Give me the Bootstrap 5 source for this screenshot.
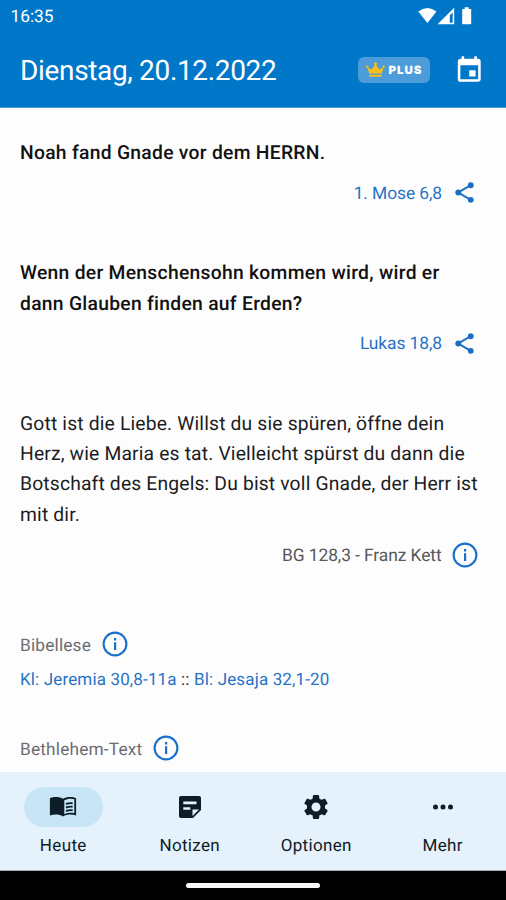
<!DOCTYPE html>
<html lang="de">
<head>
<meta charset="utf-8">
<meta name="viewport" content="width=device-width, initial-scale=1">
<title>Dienstag, 20.12.2022</title>
<link href="https://cdn.jsdelivr.net/npm/bootstrap@5.3.0/dist/css/bootstrap.min.css" rel="stylesheet">
<style>
  body { font-family: Roboto, "Liberation Sans", sans-serif; background: #fefdfe; color: #1b1c1e; width: 506px; height: 900px; text-rendering: geometricPrecision; }
  svg { display: block; flex: none; }
  .app-head { height: 108px; background: #0077c9; border-bottom: 1px solid #4b9cd8; }
  .status { height: 32px; padding: 0 32px 0 10.5px; font-size: 17.3px; line-height: 32px; }
  .status span { padding-top: 1px; }
  .title { font-size: 28px; line-height: 36px; letter-spacing: -.34px; font-weight: 400; padding-top: 2px; }
  .bar { height: 76px; padding: 0 21.5px 0 20px; }
  .plus { width: 72px; height: 26px; border-radius: 6px; background: #4b9cd8; gap: 4px; margin-right: 24px; margin-top: -1px; }
  .plus span { font: 900 11.5px/26px Inter, sans-serif; letter-spacing: .95px; }
  .content { padding: 30px 28.5px 0 20px; }
  .verse, .thought { font-size: 19.3px; line-height: 30.4px; margin: 0; white-space: nowrap; }
  .verse { font-weight: 500; letter-spacing: .28px; color: #111; }
  .thought { letter-spacing: .16px; }
  .source { height: 50px; font-size: 17.4px; letter-spacing: -.08px; }
  .source, .topic { color: #55585c; }
  .source span, .source a, .topic span { padding-top: 1px; }
  .source svg { margin: 0 0 1px 10px; }
  .source.shared svg { margin: 0 1px 1px 9.5px; }
  .section { margin-bottom: 39.7px; }
  .topic { height: 30px; font-size: 17.3px; color: #6c6e72; letter-spacing: .17px; gap: 11px; }
  .topic svg { margin-bottom: 3px; }
  .topic span { padding-top: 2px; }
  .app-link { color: #2673c5; text-decoration: none; }
  .reading { font-size: 17px; line-height: 30px; letter-spacing: .15px; margin: 4px 0 40px; }
  .lessons { padding-top: 50.5px; }
  .tabs { height: 99px; background: #e5f1fb; color: #0d1c27; padding-top: 15px; border-bottom: 1px solid #a5adb3; }
  .tab { color: inherit; text-decoration: none; font-size: 17px; line-height: 24px; letter-spacing: .35px; }
  .pill { width: 79px; height: 40px; border-radius: 20px; margin-bottom: 7px; }
  .tab.active .pill { background: #c8e5f7; }
  .gesture { height: 29px; background: #000; }
  .gesture div { width: 134px; height: 5px; border-radius: 3px; background: #f8f8f8; }
</style>
<script src="https://cdn.jsdelivr.net/npm/bootstrap@5.3.0/dist/js/bootstrap.bundle.min.js"></script>
</head>
<body class="d-flex flex-column overflow-hidden m-0">
<svg width="0" height="0" class="d-none">
  <symbol id="share" viewBox="0 0 24 24"><path fill="none" stroke="#1a6fc4" stroke-width="1.9" d="M18 5 6 12l12 7"/><g fill="#1a6fc4"><circle cx="18" cy="5" r="2.8"/><circle cx="6" cy="12" r="2.8"/><circle cx="18" cy="19" r="2.8"/></g></symbol>
  <symbol id="info" viewBox="0 0 26 26"><circle cx="13" cy="13" r="11.4" fill="none" stroke="#1a70c8" stroke-width="2.1"/><path fill="#1a70c8" d="M12 7h2.200v2.400H12zM12 11.300h2.200v7.600H12z"/></symbol>
</svg>

<header class="app-head text-white flex-shrink-0">
  <div class="status d-flex justify-content-between align-items-center">
    <span>16:35</span>
    <svg width="56" height="20" viewBox="0 0 56 20" fill="#fff">
      <path d="M.3 5.600Q9.500-1.800 18.500 5.600L9.400 17z"/>
      <path d="M36.200 1.800V18.200H19.500z"/><path fill="#0077c9" d="M34.700 6.500v10.200h-2.900V9.300z"/>
      <path d="M44.200 3h2.500V1.200h4V3h2.500v14.200q0 1-1 1h-7q-1 0-1-1z"/>
    </svg>
  </div>
  <div class="bar d-flex align-items-center">
    <h1 class="title mb-0 me-auto">Dienstag, 20.12.2022</h1>
    <div class="plus d-flex align-items-center justify-content-center">
      <svg width="19" height="16" viewBox="0 0 19 16" fill="#f9bd1c"><path d="M3.200 11.500 1.400 5.300l4.300 2.200L9.500 2l3.800 5.500 4.300-2.200-1.800 6.200zM3.300 12.700h12.400v2.100H3.300z"/><circle cx="1.300" cy="4.800" r="1.200"/><circle cx="9.500" cy="1.800" r="1.500"/><circle cx="17.700" cy="4.800" r="1.200"/></svg>
      <span>PLUS</span>
    </div>
    <svg width="30.5" height="30.5" viewBox="0 0 24 24" fill="#fff"><path d="M17 12h-5v5h5zM16 1v2H8V1H6v2H5c-1.110 0-1.990.9-1.990 2L3 19a2 2 0 0 0 2 2h14c1.100 0 2-.9 2-2V5c0-1.100-.9-2-2-2h-1V1zm3 18H5V8h14z"/></svg>
  </div>
</header>

<main class="content flex-grow-1 overflow-hidden">
  <section class="section">
    <p class="verse">Noah fand Gnade vor dem HERRN.</p>
    <div class="source shared d-flex align-items-center justify-content-end"><a class="app-link" href="#">1. Mose 6,8</a><svg width="25" height="25"><use href="#share"/></svg></div>
  </section>
  <section class="section">
    <p class="verse">Wenn der Menschensohn kommen wird, wird er<br>dann Glauben finden auf Erden?</p>
    <div class="source shared d-flex align-items-center justify-content-end"><a class="app-link" href="#">Lukas 18,8</a><svg width="25" height="25"><use href="#share"/></svg></div>
  </section>
  <section>
    <p class="thought">Gott ist die Liebe. Willst du sie spüren, öffne dein<br>Herz, wie Maria es tat. Vielleicht spürst du dann die<br>Botschaft des Engels: Du bist voll Gnade, der Herr ist<br>mit dir.</p>
    <div class="source d-flex align-items-center justify-content-end"><span>BG 128,3 - Franz Kett</span><svg width="26" height="26"><use href="#info"/></svg></div>
  </section>
  <section class="lessons">
    <div class="topic d-flex align-items-center"><span>Bibellese</span><svg width="26" height="26"><use href="#info"/></svg></div>
    <div class="reading"><a class="app-link" href="#">Kl: Jeremia 30,8-11a</a> :: <a class="app-link" href="#">Bl: Jesaja 32,1-20</a></div>
  </section>
  <section class="topic d-flex align-items-center"><span>Bethlehem-Text</span><svg width="26" height="26"><use href="#info"/></svg></section>
</main>

<nav class="tabs row g-0 flex-shrink-0 text-center">
  <a class="tab active col-3 d-flex flex-column align-items-center" href="#">
    <span class="pill d-flex align-items-center justify-content-center"><svg width="28" height="22" viewBox="0 0 28 22"><path fill="#0d1c27" d="M14 2.700C10.500.5 4.300.4.900 2.300v17.200c3.900-1.300 9.600-1.300 13.100.9 3.500-2.200 9.200-2.200 13.100-.9V2.300C23.700.4 17.500.5 14 2.700z"/><path fill="#c8e5f7" d="M15.300 4.200c3-1.700 7-2 10-1v14c-3.200-.7-7-.4-10 1.100z"/><path stroke="#0d1c27" stroke-width="1.900" fill="none" d="M17 8q3-1.200 6.600-.8M17 11.500q3-1.200 6.600-.8M17 15q3-1.200 6.600-.8"/></svg></span>Heute</a>
  <a class="tab col-3 d-flex flex-column align-items-center" href="#">
    <span class="pill d-flex align-items-center justify-content-center"><svg width="24" height="24" viewBox="0 0 24 24"><path fill="#0d1c27" d="M3 1h18q2 0 2 2v12l-8 8H3q-2 0-2-2V3q0-2 2-2z"/><path fill="#e5f1fb" d="M5.300 6.500h13.200v2.700H5.300zM5.300 12.200h7v2.600h-7zM14.500 21v-6.500H21z"/></svg></span>Notizen</a>
  <a class="tab col-3 d-flex flex-column align-items-center" href="#">
    <span class="pill d-flex align-items-center justify-content-center"><svg width="30" height="30" viewBox="0 0 24 24"><path fill="#0d1c27" d="M19.140 12.940c.04-.3.060-.61.060-.94 0-.32-.02-.64-.07-.94l2.030-1.580c.18-.14.230-.41.120-.61l-1.920-3.320c-.12-.22-.37-.29-.59-.22l-2.390.96c-.5-.38-1.030-.7-1.620-.94l-.36-2.540c-.04-.24-.24-.41-.48-.41h-3.840c-.24 0-.43.17-.47.41l-.36 2.540c-.59.24-1.130.57-1.620.94l-2.390-.96c-.22-.08-.47 0-.59.22L2.740 8.870c-.12.21-.08.47.120.61l2.030 1.580c-.05.3-.09.63-.09.94s.02.64.07.94l-2.030 1.580c-.18.14-.23.41-.12.61l1.920 3.320c.12.220.37.290.59.220l2.390-.96c.5.380 1.030.7 1.620.94l.36 2.540c.05.240.24.410.48.410h3.840c.24 0 .44-.17.47-.41l.36-2.540c.59-.24 1.130-.56 1.620-.94l2.390.96c.22.080.47 0 .59-.22l1.920-3.320c.12-.22.070-.47-.12-.61zM12 15.600a3.600 3.600 0 1 1 0-7.200 3.600 3.600 0 0 1 0 7.200z"/></svg></span>Optionen</a>
  <a class="tab col-3 d-flex flex-column align-items-center" href="#">
    <span class="pill d-flex align-items-center justify-content-center"><svg width="22" height="6" viewBox="0 0 22 6" fill="#0d1c27"><circle cx="3.500" cy="3" r="2.500"/><circle cx="11" cy="3" r="2.500"/><circle cx="18.500" cy="3" r="2.500"/></svg></span>Mehr</a>
</nav>
<div class="gesture d-flex align-items-center justify-content-center flex-shrink-0"><div></div></div>
</body>
</html>
